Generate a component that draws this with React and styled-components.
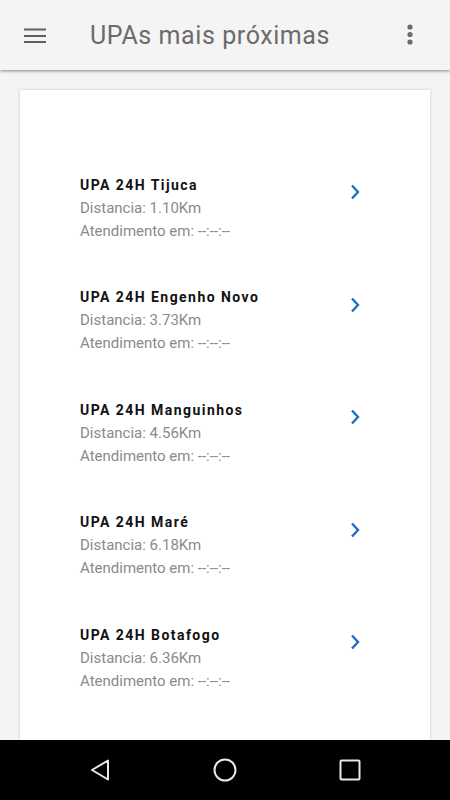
import styled, { createGlobalStyle } from "styled-components";

const GlobalStyle = createGlobalStyle`
  html, body {
    margin: 0;
    padding: 0;
    background: #f4f4f4;
  }
  body {
    font-family: Roboto, "Noto Sans", sans-serif;
  }
`;

const Screen = styled.div`
  width: 450px;
  height: 800px;
  display: flex;
  flex-direction: column;
  background: #f4f4f4;
  overflow: hidden;
`;

const Toolbar = styled.header`
  height: 70px;
  flex-shrink: 0;
  display: flex;
  align-items: center;
  background: #f4f4f4;
  box-shadow: 0 1px 3px rgba(0, 0, 0, 0.45);
  position: relative;
  z-index: 2;
`;

const IconButton = styled.button`
  width: ${(p) => p.$w}px;
  height: 70px;
  border: 0;
  background: none;
  padding: 0;
  display: flex;
  align-items: center;
  justify-content: center;
  flex-shrink: 0;
`;

const Title = styled.h1`
  flex: 1;
  margin: 0 0 0 20px;
  font-family: Roboto, sans-serif;
  font-weight: 400;
  font-size: 25px;
  color: #6b6b6b;
  letter-spacing: 0.58px;
`;

const Content = styled.main`
  flex: 1;
  min-height: 0;
  padding: 20px 20px 0;
  display: flex;
`;

const Card = styled.section`
  flex: 1;
  background: #fff;
  box-shadow: 0 0 3px rgba(0, 0, 0, 0.18);
  padding-top: 62px;
  display: flex;
  flex-direction: column;
`;

const Item = styled.div`
  height: 112.5px;
  box-sizing: border-box;
  padding: 21.5px 70px 0 60px;
  display: flex;
  align-items: flex-start;
`;

const Info = styled.div`
  flex: 1;
  display: flex;
  flex-direction: column;
`;

const Name = styled.div`
  font-size: 14px;
  font-weight: 700;
  color: #111;
  letter-spacing: 1.45px;
  line-height: 23px;
`;

const Line = styled.div`
  font-size: 15px;
  color: #8a8a8a;
  line-height: 23px;
`;

const Chevron = styled.div`
  width: 10px;
  height: 16px;
  margin-top: 10.5px;
  display: flex;
`;

const NavBar = styled.nav`
  height: 60px;
  flex-shrink: 0;
  background: #000;
  display: flex;
  align-items: center;
  justify-content: space-between;
  padding: 0 88px 0 88px;
`;

const NavKey = styled.div`
  width: 24px;
  height: 24px;
  display: flex;
  align-items: center;
  justify-content: center;
`;

const upas = [
  { name: "UPA 24H Tijuca", dist: "1.10Km" },
  { name: "UPA 24H Engenho Novo", dist: "3.73Km" },
  { name: "UPA 24H Manguinhos", dist: "4.56Km" },
  { name: "UPA 24H Maré", dist: "6.18Km" },
  { name: "UPA 24H Botafogo", dist: "6.36Km" },
];

export default function App() {
  return (
    <Screen>
      <GlobalStyle />
      <Toolbar>
        <IconButton $w={70}>
          <svg width="22" height="16" viewBox="0 0 22 16">
            <g fill="#5f5f5f">
              <rect x="0" y="1.5" width="22" height="2" />
              <rect x="0" y="8" width="22" height="2" />
              <rect x="0" y="14" width="22" height="2" />
            </g>
          </svg>
        </IconButton>
        <Title>UPAs mais próximas</Title>
        <IconButton $w={80}>
          <svg width="6" height="22" viewBox="0 0 6 22">
            <g fill="#6a6a6a">
              <circle cx="3" cy="3" r="2.6" />
              <circle cx="3" cy="10.5" r="2.6" />
              <circle cx="3" cy="18" r="2.6" />
            </g>
          </svg>
        </IconButton>
      </Toolbar>
      <Content>
        <Card>
          {upas.map((u) => (
            <Item key={u.name}>
              <Info>
                <Name>{u.name}</Name>
                <Line>Distancia: {u.dist}</Line>
                <Line>Atendimento em: --:--:--</Line>
              </Info>
              <Chevron>
                <svg width="10" height="16" viewBox="0 0 10 16">
                  <path d="M2 1.5 L8 8 L2 14.5" fill="none" stroke="#1c6fc2" strokeWidth="2.4" />
                </svg>
              </Chevron>
            </Item>
          ))}
        </Card>
      </Content>
      <NavBar>
        <NavKey>
          <svg width="20" height="24" viewBox="0 0 20 24">
            <path d="M18 2.5 L18 21.5 L2 12 Z" fill="none" stroke="#e8e8e8" strokeWidth="2" strokeLinejoin="round" />
          </svg>
        </NavKey>
        <NavKey>
          <svg width="24" height="24" viewBox="0 0 24 24">
            <circle cx="12" cy="12" r="10.5" fill="none" stroke="#e8e8e8" strokeWidth="2" />
          </svg>
        </NavKey>
        <NavKey>
          <svg width="22" height="22" viewBox="0 0 22 22">
            <rect x="1.5" y="1.5" width="19" height="19" rx="1" fill="none" stroke="#e8e8e8" strokeWidth="2" />
          </svg>
        </NavKey>
      </NavBar>
    </Screen>
  );
}
